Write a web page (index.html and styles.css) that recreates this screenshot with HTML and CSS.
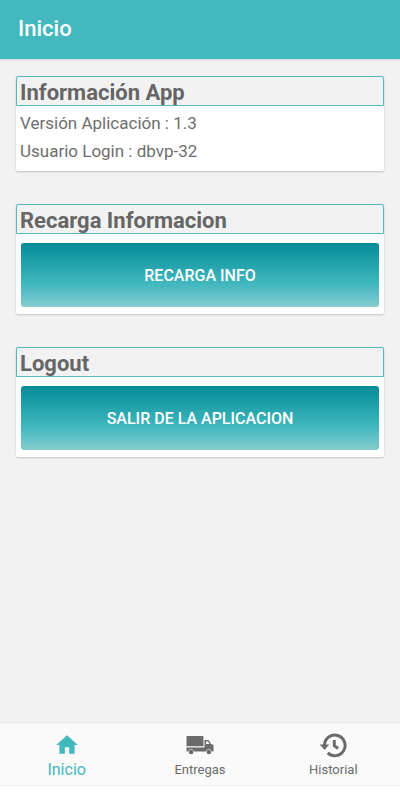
FILE: index.html
```html
<!DOCTYPE html>
<html lang="es">
<head>
<meta charset="UTF-8">
<meta name="viewport" content="width=device-width, initial-scale=1.0">
<title>Inicio</title>
<link rel="stylesheet" href="styles.css">
</head>
<body>
<header class="toolbar">
    <h1>Inicio</h1>
</header>

<main class="content">
    <section class="card">
        <h2>Información App</h2>
        <p>Versión Aplicación : 1.3</p>
        <p>Usuario Login : dbvp-32</p>
    </section>

    <section class="card">
        <h2>Recarga Informacion</h2>
        <button type="button">RECARGA INFO</button>
    </section>

    <section class="card">
        <h2>Logout</h2>
        <button type="button">SALIR DE LA APLICACION</button>
    </section>
</main>

<nav class="tabs">
    <a href="#inicio" class="tab active">
        <svg width="26" height="26" viewBox="0 0 24 24" fill="currentColor" aria-hidden="true">
            <path d="M10 20v-6h4v6h5v-8h3L12 3 2 12h3v8z"/>
        </svg>
        <span>Inicio</span>
    </a>
    <a href="#entregas" class="tab">
        <svg width="28" height="26" viewBox="0 0 28 26" fill="currentColor" aria-hidden="true">
            <path d="M1.500 4h15a1 1 0 0 1 1 1v9.300H.5V5a1 1 0 0 1 1-1z"/>
            <path d="M18.500 8h4l2.500 4 2.500 1V19.500h-1.700a3 3 0 0 0-5.800 0H8a3 3 0 0 0-5.800 0H.5v-4h18zM20 9.500V12h3.500L22 9.500z"/>
            <circle cx="5.100" cy="20" r="2.300"/>
            <circle cx="22.900" cy="20" r="2.300"/>
        </svg>
        <span>Entregas</span>
    </a>
    <a href="#historial" class="tab">
        <svg width="28" height="26" viewBox="0 0 28 26" fill="none" stroke="currentColor" stroke-width="3" aria-hidden="true">
            <path d="M5.500 13A10.300 10.300 0 1 1 8.700 20.900"/>
            <path d="M15.300 8v5.700l3.800 2.800"/>
            <path d="M.8 12.500h9.400L5.500 18z" fill="currentColor" stroke="none"/>
        </svg>
        <span>Historial</span>
    </a>
</nav>
</body>
</html>
```
FILE: styles.css
```css
body {
    font-family: Roboto, 'Liberation Sans', sans-serif;
    margin: 0;
    min-height: 100vh;
    display: flex;
    flex-direction: column;
    background-color: #fff;
    color: #6e6e6e;
}

h1, h2, p {
    margin: 0;
}

.toolbar {
    padding: 14px 18px 15px;
    background-color: #42b8bf;
    color: #fff;
    box-shadow: 0 1px 2px rgba(0, 0, 0, 0.15);
    z-index: 1;
}

h1 {
    font-size: 22px;
    line-height: 30px;
    font-weight: 500;
}

.content {
    flex: 1;
    display: flex;
    flex-direction: column;
    gap: 33px;
    padding: 17px 16px;
    background-color: #f2f2f2;
}

.card {
    padding-bottom: 6px;
    background-color: #fff;
    border-radius: 2px;
    box-shadow: 0 1px 2px rgba(0, 0, 0, 0.2);
}

.card h2 {
    padding: 3px 3px 0;
    margin-bottom: 3px;
    border: 1px solid #55b8bd;
    border-radius: 2px 2px 0 0;
    background-color: #f2f2f2;
    color: #666;
    font-size: 22px;
    line-height: 25px;
    font-weight: 700;
}

.card p {
    padding: 0 4px;
    font-size: 17px;
    line-height: 28px;
}

.card button {
    display: block;
    width: calc(100% - 10px);
    height: 64px;
    margin: 9px 5px 1px;
    border: 0;
    border-radius: 3px;
    background: linear-gradient(#048c98, #42b8bf 65%, #86cdcf);
    color: #fff;
    font-family: inherit;
    font-size: 16px;
    font-weight: 500;
    cursor: pointer;
}

.tabs {
    display: flex;
    margin-bottom: 14px;
    border-top: 1px solid #e6e6e6;
    border-bottom: 1px solid #eee;
    background-color: #fafafa;
}

.tab {
    flex: 1;
    display: flex;
    flex-direction: column;
    align-items: center;
    padding: 9px 0 5px;
    color: #6b6b6b;
    font-size: 13px;
    line-height: 20px;
    text-decoration: none;
}

.tab span {
    padding-top: 2px;
}

.tab.active {
    color: #42b8bf;
    font-size: 16px;
}
```
